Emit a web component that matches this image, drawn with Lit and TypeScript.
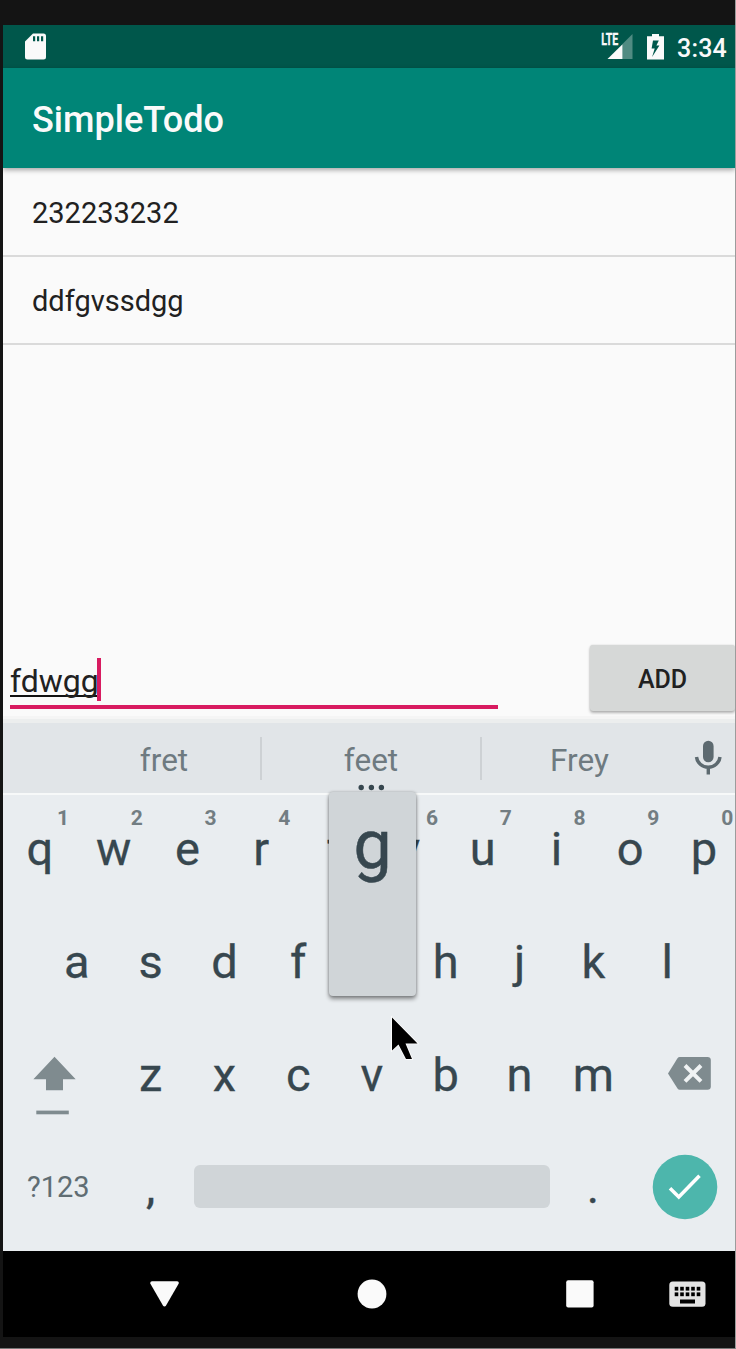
import { LitElement, html, css, svg, nothing } from "lit";
import { customElement, property } from "lit/decorators.js";

@customElement("status-bar")
class StatusBar extends LitElement {
  static styles = css`
    :host { display: flex; height: 43px; background: #00574b; color: #fafafa; align-items: center; }
    .sd { display: block; margin-left: 22px; }
    .signal { display: block; margin-left: auto; overflow: visible; }
    .battery { display: block; margin-left: 14px; }
    .time { font: 500 25px/43px Roboto, sans-serif; margin: 3px 0 0 13px; width: 58px; white-space: nowrap; letter-spacing: 0.2px; }
  `;
  render() {
    return html`
      <svg class="sd" width="21" height="27" viewBox="0 0 21 27">
        <path fill="#fafafa" fill-rule="evenodd" d="M8 0.5H18.5Q21 0.5 21 3V24Q21 26.5 18.5 26.5H2.5Q0 26.5 0 24V8.5ZM8 3.2V8.2H10.2V3.2ZM12 3.2V8.2H14.2V3.2ZM16 3.2V8.2H18.2V3.2Z" />
      </svg>
      <svg class="signal" width="32" height="26" viewBox="0 0 32 26">
        <path fill="#fafafa" fill-opacity=".32" d="M31.5 0V25H21.5V10Z" />
        <path fill="#fafafa" d="M21.5 10.3V25H6.5Z" />
        <text x="0.3" y="11.4" fill="#fafafa" stroke="#fafafa" stroke-width=".3" font-family="Roboto, sans-serif" font-weight="700" font-size="16" textLength="17" lengthAdjust="spacingAndGlyphs">LTE</text>
      </svg>
      <svg class="battery" width="17" height="26" viewBox="0 0 17 26">
        <path fill="#fafafa" fill-rule="evenodd" d="M5 0H12V2.3H17V25.5H0V2.3H5ZM6 6.4L4.6 14.6H7.7L5.1 23L12.4 11.4H9.4L11.8 6.4Z" />
      </svg>
      <div class="time">3:34</div>
    `;
  }
}

@customElement("todo-list")
class TodoList extends LitElement {
  static styles = css`
    :host { display: block; padding-top: 1px; }
    .item { height: 88px; box-sizing: border-box; border-bottom: 2px solid #dadada; padding-left: 29px; font: 400 29px/89px Roboto, sans-serif; color: #212121; }
  `;
  @property({ attribute: false }) items: string[] = [];
  render() {
    return this.items.map((t) => html`<div class="item">${t}</div>`);
  }
}

@customElement("entry-row")
class EntryRow extends LitElement {
  static styles = css`
    :host { display: flex; justify-content: space-between; align-items: flex-start; height: 71px; }
    .field { margin: 13px 0 0 7px; width: 488px; height: 47px; border-bottom: 4px solid #d81b60; display: flex; }
    .text { font: 400 32px/47px Roboto, sans-serif; color: #212121; border-bottom: 2px solid #111; height: 37px; }
    .caret { width: 4px; height: 43px; background: #d81b60; margin-left: -1.5px; }
    .add { width: 145px; height: 66px; border-radius: 3px; background: #d6d8d7; color: #212121; text-align: center; font: 500 25px/69px Roboto, sans-serif; box-shadow: 0 2px 3px rgba(0,0,0,.28), 0 0 2px rgba(0,0,0,.14); }
  `;
  render() {
    return html`
      <div class="field"><span class="text">fdwgg</span><span class="caret"></span></div>
      <div class="add">ADD</div>
    `;
  }
}

@customElement("suggestion-strip")
class SuggestionStrip extends LitElement {
  static styles = css`
    :host { display: flex; align-items: center; height: 70px; background: #e1e5e8; border-top: 4px solid #eceeee; border-bottom: 2px solid #f7f9f9; padding-left: 65px; position: relative; }
    .word { width: 195px; text-align: center; font: 400 31.5px/70px Roboto, sans-serif; color: #6e7a80; height: 70px; padding-top: 3px; box-sizing: border-box; }
    .word.middle { width: 218px; }
    .word.first { width: 192px; }
    .sep { width: 2px; height: 43px; background: #cdd1d4; }
    .mic { display: block; margin: -2px 0 0 17px; }
    .more { position: absolute; left: 355px; top: 61px; }
  `;
  render() {
    return html`
      <div class="word first">fret</div>
      <div class="sep"></div>
      <div class="word middle">feet</div>
      <div class="sep"></div>
      <div class="word">Frey</div>
      <svg class="mic" width="28" height="35" viewBox="0 0 28 35">
        <rect x="9" y="0.8" width="10.6" height="21.5" rx="5.3" fill="#5d6a70" />
        <path d="M2.5 17A11.8 11.2 0 0 0 26 17M14.3 27.5V34.6" fill="none" stroke="#5d6a70" stroke-width="3.4" />
      </svg>
      <svg class="more" width="28" height="7" viewBox="0 0 28 7">
        ${[3.2, 13.4, 23.4].map((x) => svg`<circle cx=${x} cy="3.5" r="2.7" fill="#37474f" />`)}
      </svg>
    `;
  }
}

@customElement("soft-keyboard")
class SoftKeyboard extends LitElement {
  static styles = css`
    :host { display: block; height: 456px; background: #e9edf0; position: relative; font-family: Roboto, sans-serif; color: #37474f; }
    .row { display: flex; width: 738px; height: 112.6px; }
    .row.top { margin-top: -2px; }
    .row.home { padding-left: 36.9px; box-sizing: border-box; }
    .key { width: 73.8px; position: relative; text-align: center; font-size: 47px; line-height: 112px; -webkit-text-stroke: 0.3px #37474f; }
    .low .key { line-height: 114px; }
    .hint { position: absolute; left: 50px; width: 20px; top: 13px; font-weight: 700; font-size: 21px; line-height: 24px; color: #727d82; -webkit-text-stroke: 0; }
    .shift, .del, .enter { display: block; flex: none; }
    .shift, .del { width: 110.7px; height: 112px; }
    .symbols { width: 110.7px; text-align: center; font-size: 29px; line-height: 113px; color: #606d73; }
    .space { width: 356px; height: 43px; border-radius: 6px; background: #d0d5d8; margin: 34px 6px 0 6.5px; }
    .enter { margin: 23px 0 0 22.5px; }
    .preview { position: absolute; left: 326px; top: -3px; width: 87px; height: 204px; border-radius: 4px; background: #d0d5d8; text-align: center; font-size: 68px; line-height: 106px; box-shadow: 0 3px 4px rgba(0,0,0,.42), 0 0 3px rgba(0,0,0,.25); -webkit-text-stroke: 0.5px #37474f; }
    .pointer { position: absolute; left: 387px; top: 220px; }
  `;
  private keys(letters: string, hints: string[] = []) {
    return [...letters].map(
      (c, i) => html`<div class="key">${c}${hints[i] ? html`<span class="hint">${hints[i]}</span>` : nothing}</div>`
    );
  }
  render() {
    return html`
      <div class="row top">${this.keys("qwertyuiop", ["1", "2", "3", "4", "", "6", "7", "8", "9", "0"])}</div>
      <div class="row home">${this.keys("asdf hjkl")}</div>
      <div class="row low">
        <svg class="shift" viewBox="0 0 110.7 112">
          <path d="M51.5 38.8L72.7 61.2H60V72.2H43V61.2H30.4Z" fill="#7f8b8f" />
          <rect x="33.3" y="92.6" width="32.5" height="3.7" fill="#7f8b8f" />
        </svg>
        ${this.keys("zxcvbnm")}
        <svg class="del" viewBox="0 0 110.7 112">
          <g transform="translate(1 0)">
            <path d="M48.7 39H76.5Q79.8 39 79.8 42V68.8Q79.8 71.8 76.5 71.8H48.7Q47.4 71.8 46.5 70.5L37 55.4L46.5 40.3Q47.4 39 48.7 39Z" fill="#7f8b8f" />
            <path d="M54 47.5L70 63.3M70 47.5L54 63.3" stroke="#f0f3f4" stroke-width="4" />
          </g>
        </svg>
      </div>
      <div class="row">
        <div class="symbols">?123</div>
        ${this.keys(",")}
        <div class="space"></div>
        ${this.keys(".")}
        <svg class="enter" width="66" height="66" viewBox="0 0 66 66">
          <circle cx="33" cy="33" r="32.3" fill="#4db6ac" />
          <path d="M18 34.3L26.8 43L47.5 21.8" fill="none" stroke="#fff" stroke-width="3.6" />
        </svg>
      </div>
      <div class="preview">g</div>
      <svg class="pointer" width="34" height="46" viewBox="0 0 34 46">
        <path d="M2 2.5V35.5L8.5 29.5L16 44H22L15.5 28.5H27.5Z" fill="#000" stroke="#fff" stroke-width="1.6" paint-order="stroke" />
      </svg>
    `;
  }
}

@customElement("nav-bar")
class NavBar extends LitElement {
  static styles = css`
    :host { display: flex; align-items: center; height: 86px; background: #000; padding-left: 147px; }
    svg { display: block; flex: none; }
    .home { margin-left: 178px; }
    .recent { margin-left: 179px; }
    .ime { margin-left: 75px; }
  `;
  render() {
    const dots = [5.5, 11, 16.5, 22, 27.5];
    return html`
      <svg width="29" height="26" viewBox="0 0 29 26">
        <path d="M2 0.3H27.2Q29.4 0.6 28.6 2.8L16.2 24.2Q14.5 26.8 12.8 24.2L0.4 2.8Q-0.3 0.6 2 0.3Z" fill="#fafafa" />
      </svg>
      <svg class="home" width="30" height="30" viewBox="0 0 30 30"><circle cx="15" cy="15" r="14.4" fill="#fafafa" /></svg>
      <svg class="recent" width="28" height="28" viewBox="0 0 28 28"><rect x=".2" y=".2" width="27.4" height="27.4" rx="2" fill="#fafafa" /></svg>
      <svg class="ime" width="37" height="26" viewBox="0 0 37 26">
        <rect x=".3" y=".4" width="36.2" height="25.4" rx="3.5" fill="#e4e4e4" />
        ${[5.8, 11.4].map((y) => dots.map((x) => svg`<rect x=${x + 0.2} y=${y} width="3.6" height="3.8" fill="#000" />`))}
        <rect x="11" y="18.5" width="15" height="4" fill="#000" />
      </svg>
    `;
  }
}

@customElement("app-root")
class AppRoot extends LitElement {
  static styles = css`
    :host { display: block; width: 736px; height: 1349px; box-sizing: border-box; background: #141414; border-right: 1px solid #9c9c9c; border-bottom: 1px solid #777; padding: 25px 0 11px 3px; overflow: hidden; }
    .screen { display: flex; flex-direction: column; width: 732px; height: 1312px; overflow: hidden; background: #fafafa; }
    .title { height: 100px; background: #008577; color: #fafafa; font: 500 36.1px/105px Roboto, sans-serif; padding-left: 29px; box-shadow: 0 2px 5px rgba(0,0,0,.35); position: relative; }
    .content { flex: 1; display: flex; flex-direction: column; justify-content: space-between; }
    .edge { height: 3px; background: #f5f5f5; }
    soft-keyboard, suggestion-strip, nav-bar, status-bar, .title { flex: none; }
  `;
  render() {
    return html`
      <div class="screen">
        <status-bar></status-bar>
        <div class="title">SimpleTodo</div>
        <div class="content">
          <todo-list .items=${["232233232", "ddfgvssdgg"]}></todo-list>
          <entry-row></entry-row>
        </div>
        <div class="edge"></div>
        <suggestion-strip></suggestion-strip>
        <soft-keyboard></soft-keyboard>
        <nav-bar></nav-bar>
      </div>
    `;
  }
}
